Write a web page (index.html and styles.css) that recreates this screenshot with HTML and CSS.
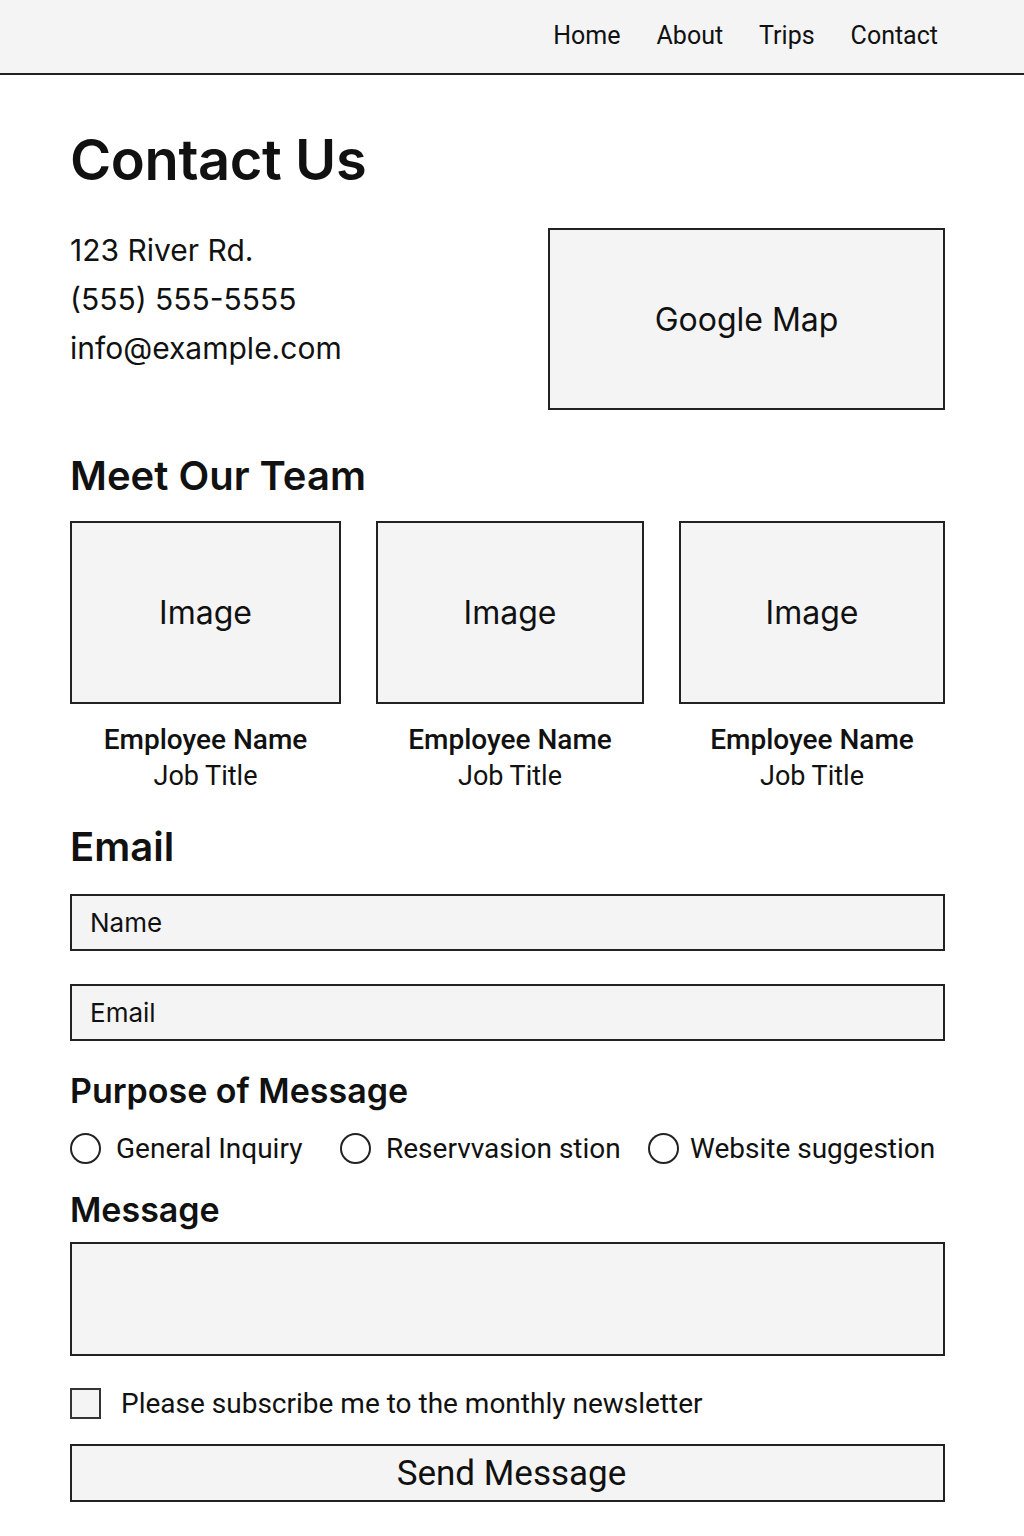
FILE: index.html
```html
<!DOCTYPE html>
<html lang="en">
<head>
<meta charset="utf-8">
<title>Contact Us</title>
<link rel="stylesheet" href="styles.css">
</head>
<body>
<header class="site-header">
  <nav class="nav">
    <a href="#">Home</a>
    <a href="#">About</a>
    <a href="#">Trips</a>
    <a href="#">Contact</a>
  </nav>
</header>
<main class="page">
  <h1 class="title">Contact Us</h1>
  <section class="contact-row">
    <div class="contact-info">
      <p>123 River Rd.</p>
      <p>(555) 555-5555</p>
      <p>info@example.com</p>
    </div>
    <div class="map">Google Map</div>
  </section>

  <h2 class="section-title team-title">Meet Our Team</h2>
  <section class="team">
    <div class="member">
      <div class="photo">Image</div>
      <div class="name">Employee Name</div>
      <div class="job">Job Title</div>
    </div>
    <div class="member">
      <div class="photo">Image</div>
      <div class="name">Employee Name</div>
      <div class="job">Job Title</div>
    </div>
    <div class="member">
      <div class="photo">Image</div>
      <div class="name">Employee Name</div>
      <div class="job">Job Title</div>
    </div>
  </section>

  <h2 class="section-title email-title">Email</h2>
  <form class="form">
    <div class="field">Name</div>
    <div class="field">Email</div>
    <h3 class="sub-title">Purpose of Message</h3>
    <div class="radios">
      <label class="radio"><span class="circle"></span>General Inquiry</label>
      <label class="radio"><span class="circle"></span>Reservvasion stion</label>
      <label class="radio"><span class="circle"></span>Website suggestion</label>
    </div>
    <h3 class="sub-title message-title">Message</h3>
    <div class="textarea"></div>
    <label class="check"><span class="box"></span>Please subscribe me to the monthly newsletter</label>
    <div class="button">Send Message</div>
  </form>
</main>
</body>
</html>
```

FILE: styles.css
```css
* { box-sizing: border-box; }
body {
  margin: 0;
  background: #fff;
  color: #111;
  font-family: "Inter", "Roboto", "Liberation Sans", sans-serif;
}
.site-header {
  height: 75px;
  background: #f4f4f4;
  border-bottom: 2px solid #222;
  display: flex;
  justify-content: flex-end;
  align-items: center;
}
.nav {
  display: flex;
  gap: 36px;
  padding-right: 86px;
  padding-bottom: 2px;
  font-family: "Roboto", "Liberation Sans", sans-serif;
  font-size: 25px;
}
.nav a { color: #111; text-decoration: none; }

.page {
  padding: 53px 79px 30px 70px;
}
.title {
  font-size: 56px;
  font-weight: 600;
  line-height: 64px;
  margin: 0;
  letter-spacing: -0.4px;
}

.contact-row {
  display: flex;
  justify-content: space-between;
  margin-top: 36px;
}
.contact-info {
  font-size: 30px;
  line-height: 49px;
  margin-top: -2px;
}
.contact-info p { margin: 0; }
.map {
  width: 397px;
  height: 182px;
  border: 2px solid #222;
  background: #f4f4f4;
  display: flex;
  align-items: center;
  justify-content: center;
  font-size: 32px;
}

.section-title {
  font-weight: 600;
  margin: 0;
}
.team-title {
  font-size: 40px;
  line-height: 46px;
  margin-top: 43px;
}
.team {
  display: grid;
  grid-template-columns: 271px 268px 266px;
  justify-content: space-between;
  margin-top: 22px;
}
.member {
  text-align: center;
}
.photo {
  height: 183px;
  border: 2px solid #222;
  background: #f4f4f4;
  display: flex;
  align-items: center;
  justify-content: center;
  font-size: 32px;
}
.name {
  margin-top: 18px;
  font-family: "Roboto", "Liberation Sans", sans-serif;
  font-weight: 500;
  font-size: 28px;
  line-height: 36px;
}
.job {
  font-family: "Roboto", "Liberation Sans", sans-serif;
  font-size: 27px;
  line-height: 36px;
}

.email-title {
  font-size: 40px;
  line-height: 48px;
  margin-top: 29px;
}
.form { margin: 0; }
.field {
  height: 57px;
  border: 2px solid #222;
  background: #f4f4f4;
  display: flex;
  align-items: center;
  padding-left: 18px;
  font-size: 26px;
  margin-top: 23px;
}
.field + .field { margin-top: 33px; }
.sub-title {
  font-size: 34px;
  font-weight: 600;
  line-height: 42px;
  margin: 29px 0 0 0;
}
.radios {
  display: grid;
  grid-template-columns: 270px 308px auto;
  margin-top: 20px;
  font-family: "Roboto", "Liberation Sans", sans-serif;
  font-size: 28px;
  white-space: nowrap;
}
.radio {
  display: flex;
  align-items: center;
  gap: 15px;
}
.radio:last-child { gap: 11px; }
.circle {
  flex: none;
  width: 31px;
  height: 31px;
  border: 2px solid #222;
  border-radius: 50%;
  background: #fff;
}
.message-title { margin-top: 24px; }
.textarea {
  height: 114px;
  border: 2px solid #222;
  background: #f4f4f4;
  margin-top: 11px;
}
.check {
  display: flex;
  align-items: center;
  gap: 20px;
  margin-top: 31px;
  font-family: "Roboto", "Liberation Sans", sans-serif;
  font-size: 28px;
}
.box {
  flex: none;
  width: 31px;
  height: 31px;
  border: 2px solid #333;
  background: #f4f4f4;
}
.button {
  height: 58px;
  border: 2px solid #222;
  background: #f4f4f4;
  margin-top: 24px;
  padding-left: 8px;
  display: flex;
  align-items: center;
  justify-content: center;
  font-family: "Roboto", "Liberation Sans", sans-serif;
  font-size: 35px;
}
```
